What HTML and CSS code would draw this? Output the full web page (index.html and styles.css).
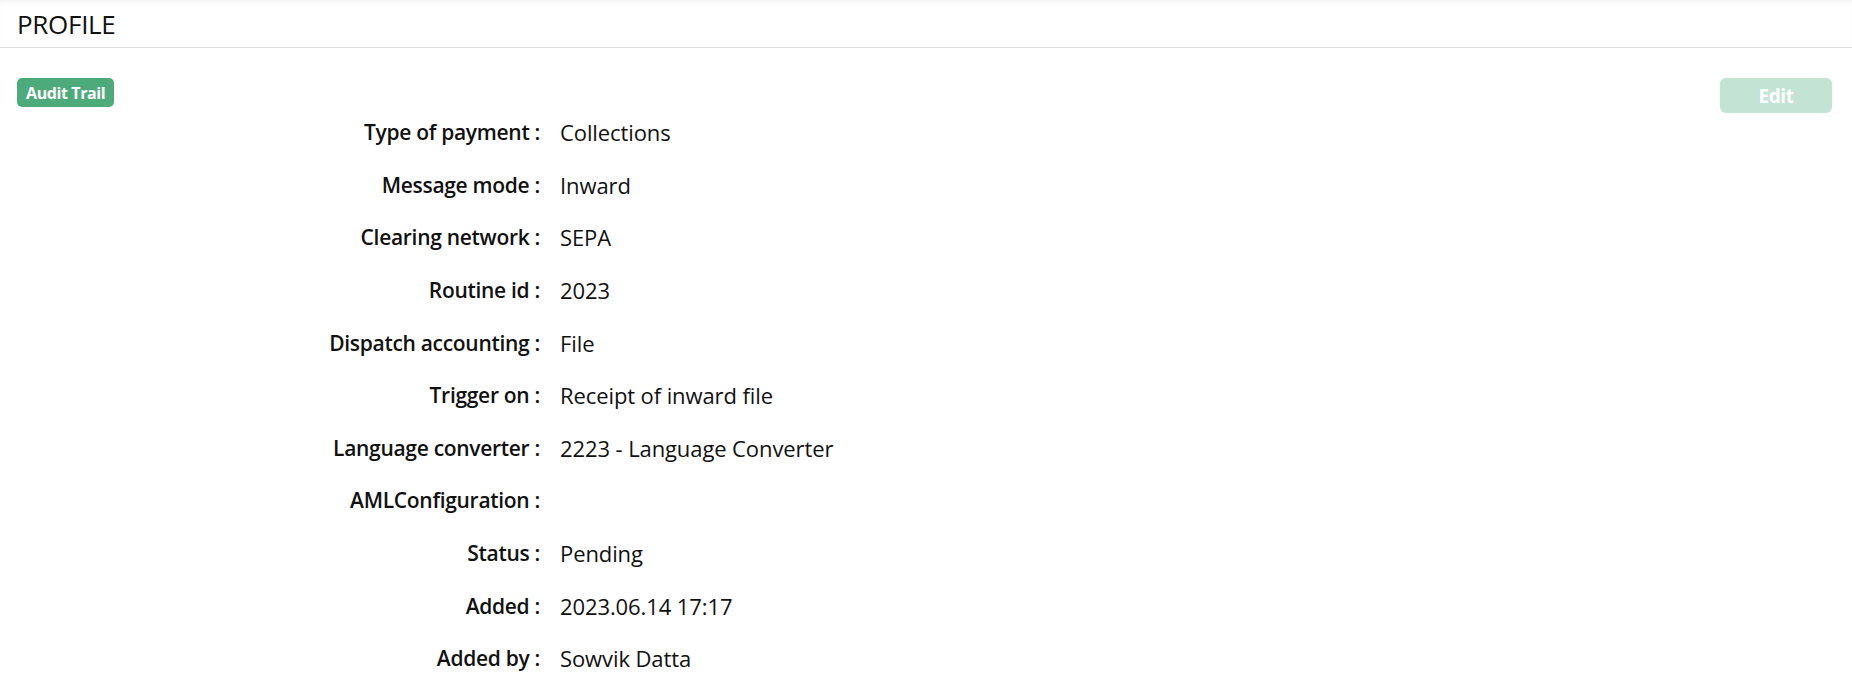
FILE: index.html
```html
<!DOCTYPE html>
<html>
<head>
<meta charset="utf-8">
<link rel="stylesheet" href="styles.css">
</head>
<body>
<header class="page-header">
  <h1 class="page-title">PROFILE</h1>
</header>
<div class="toolbar">
  <span class="badge">Audit Trail</span>
  <button class="btn-edit" disabled>Edit</button>
</div>
<dl class="details">
  <div class="row"><dt>Type of payment :</dt><dd>Collections</dd></div>
  <div class="row"><dt>Message mode :</dt><dd>Inward</dd></div>
  <div class="row"><dt>Clearing network :</dt><dd>SEPA</dd></div>
  <div class="row"><dt>Routine id :</dt><dd>2023</dd></div>
  <div class="row"><dt>Dispatch accounting :</dt><dd>File</dd></div>
  <div class="row"><dt>Trigger on :</dt><dd>Receipt of inward file</dd></div>
  <div class="row"><dt>Language converter :</dt><dd>2223 - Language Converter</dd></div>
  <div class="row"><dt>AMLConfiguration :</dt><dd></dd></div>
  <div class="row"><dt>Status :</dt><dd>Pending</dd></div>
  <div class="row"><dt>Added :</dt><dd>2023.06.14 17:17</dd></div>
  <div class="row"><dt>Added by :</dt><dd>Sowvik Datta</dd></div>
</dl>
</body>
</html>
```
FILE: styles.css
```css
* { box-sizing: border-box; }
html, body { margin: 0; padding: 0; background: #fff; }
body {
  font-family: "Open Sans", "Noto Sans", sans-serif;
  color: #111;
}
.page-header {
  height: 48px;
  border-bottom: 1px solid #dcdcdc;
  padding: 0 17px;
  display: flex;
  align-items: flex-end;
  box-shadow: inset 0 6px 6px -4px rgba(0,0,0,0.06);
}
.page-title {
  margin: 0 0 8px 0;
  font-size: 26px;
  font-weight: 400;
  line-height: 30px;
  color: #111;
  letter-spacing: -0.3px;
}
.toolbar {
  display: flex;
  justify-content: space-between;
  align-items: flex-start;
  padding: 0 20px 0 17px;
  margin-top: 30px;
  height: 35px;
}
.badge {
  display: inline-flex;
  align-items: center;
  height: 29px;
  padding: 0 9px;
  background: #4dab7b;
  color: #fff;
  font-weight: 700;
  font-size: 16px;
  border-radius: 5px;
  letter-spacing: -0.4px;
}
.btn-edit {
  width: 112px;
  height: 35px;
  border: 0;
  border-radius: 6px;
  background: #c3e3d4;
  color: #fff;
  font-family: inherit;
  font-weight: 700;
  font-size: 19px;
  letter-spacing: -0.4px;
}
.details {
  margin: -7px 0 0 0;
}
.row {
  display: grid;
  grid-template-columns: 540px 1fr;
  column-gap: 20px;
  height: 52.6px;
  align-items: center;
}
dt {
  text-align: right;
  font-weight: 600;
  font-size: 21px;
  letter-spacing: -0.3px;
}
dd {
  margin: 0;
  font-size: 22px;
  font-weight: 400;
  letter-spacing: -0.1px;
}
```
